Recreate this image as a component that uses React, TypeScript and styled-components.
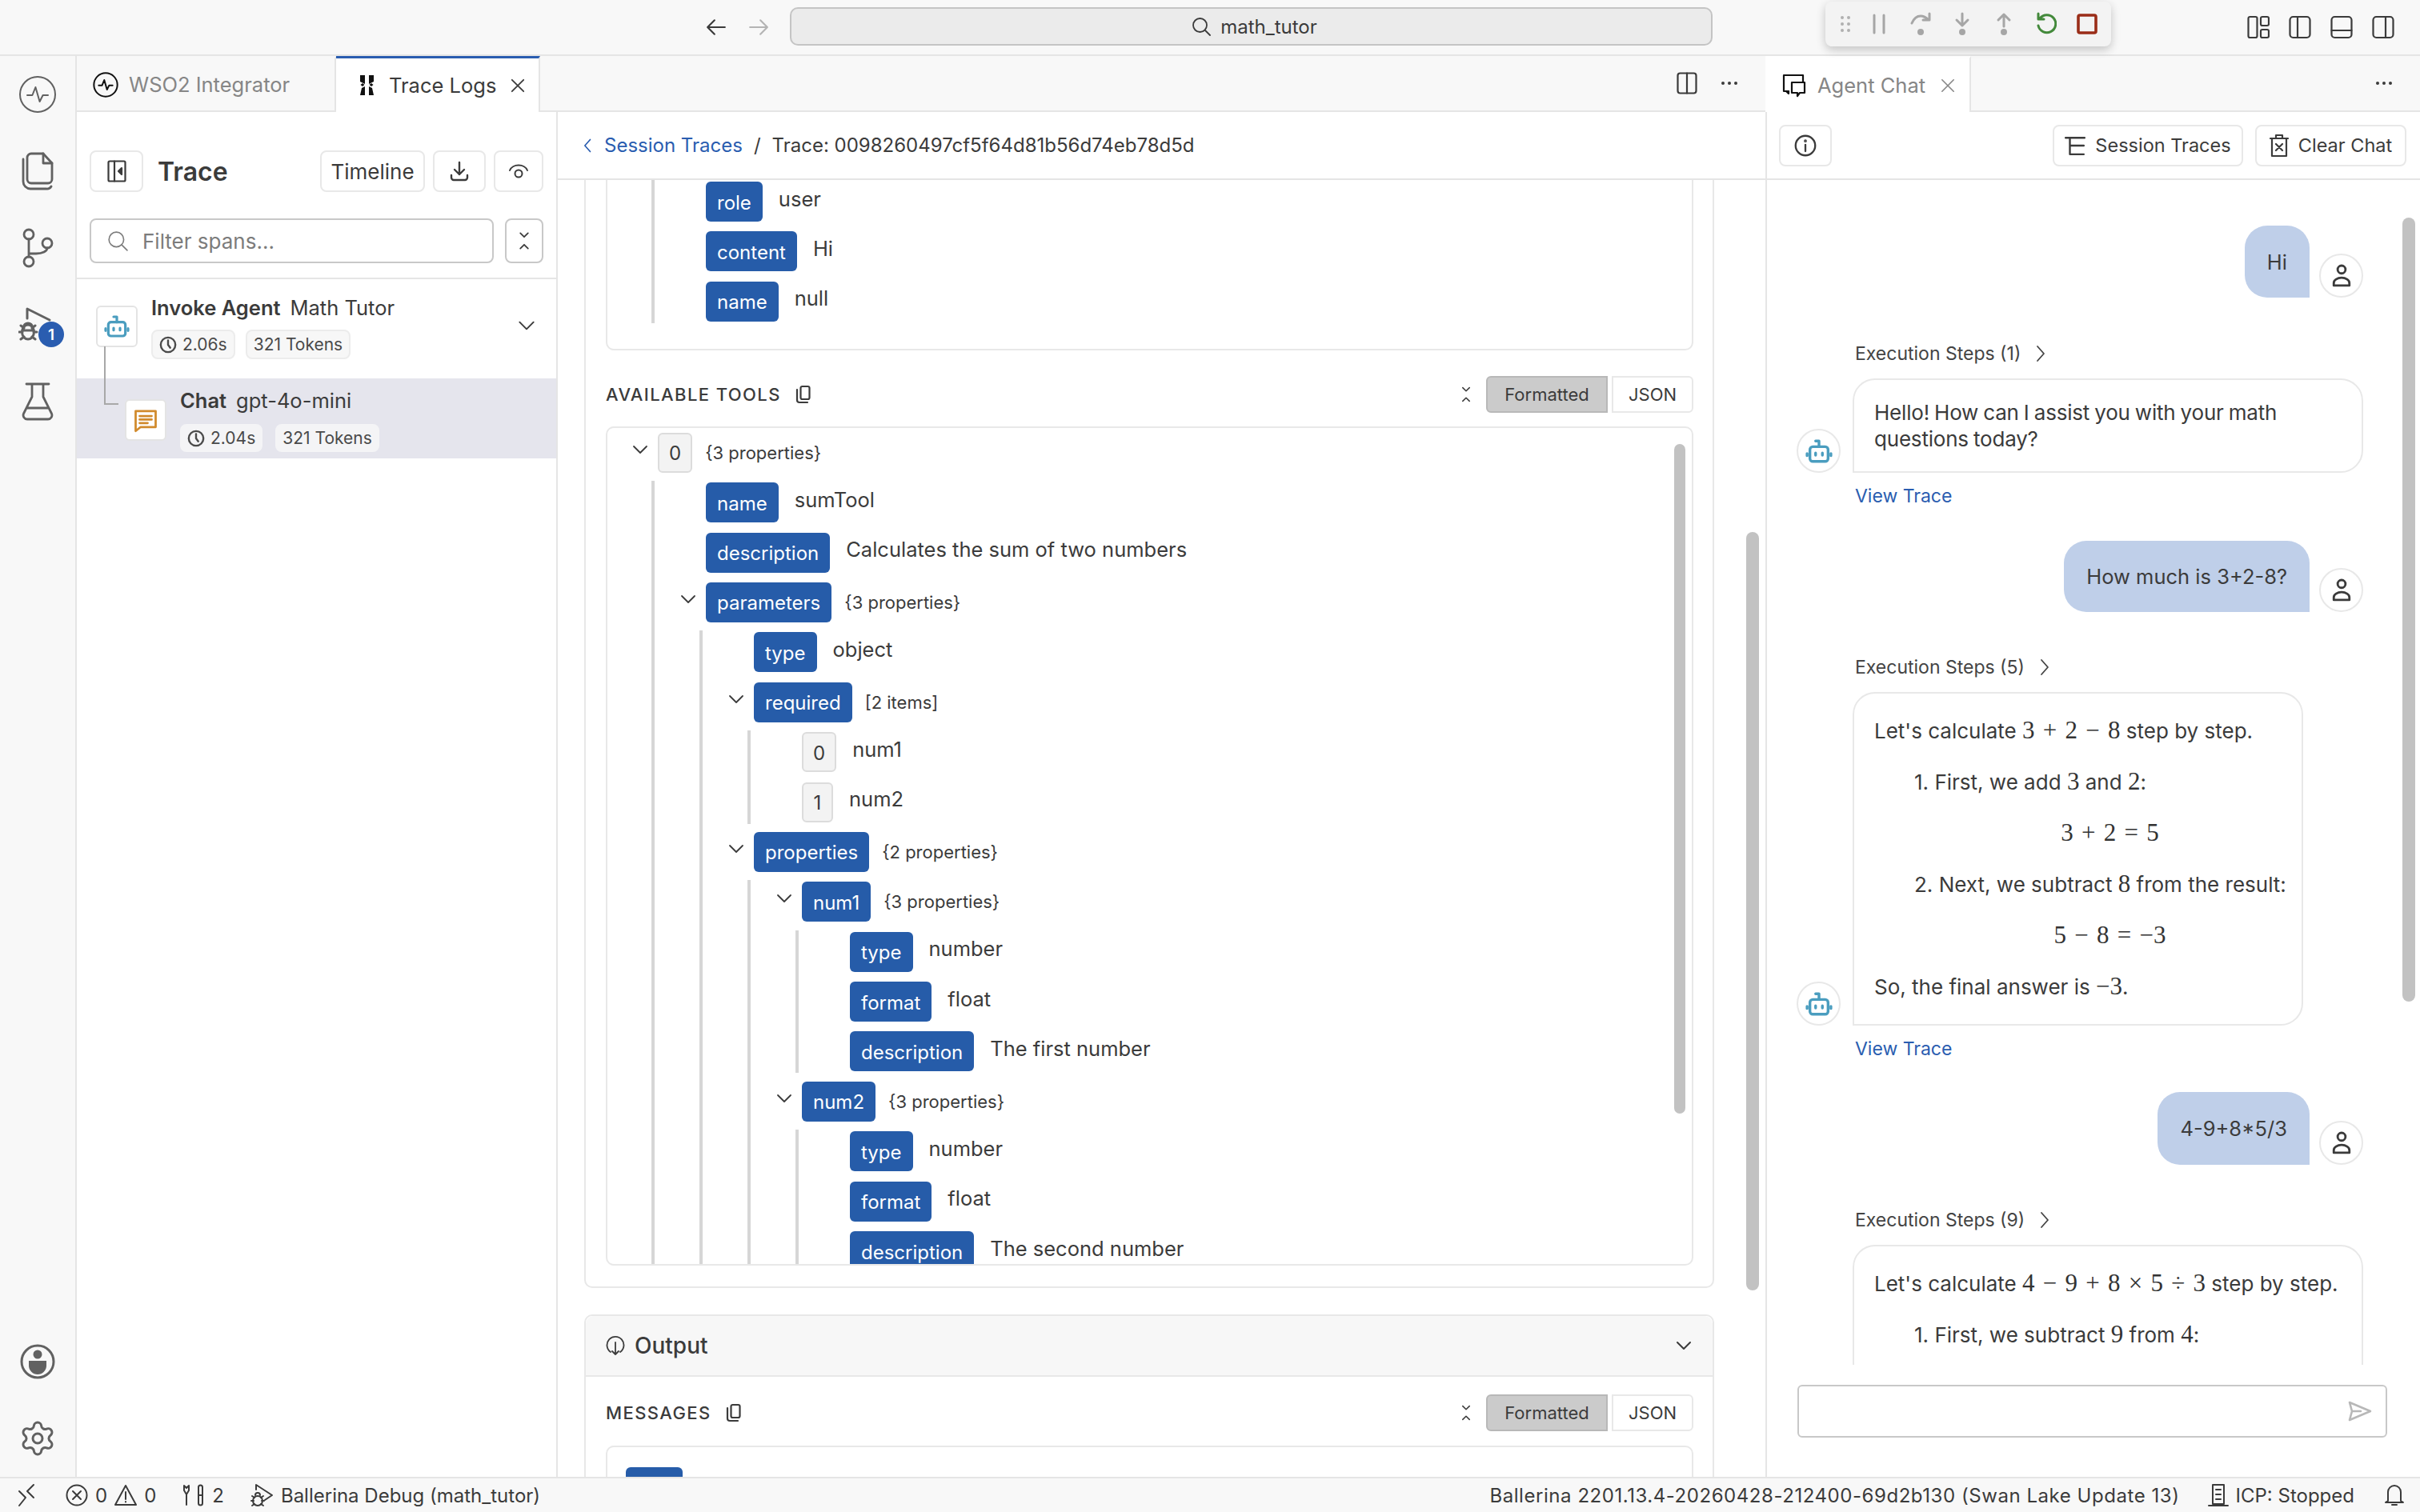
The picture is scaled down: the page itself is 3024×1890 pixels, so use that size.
import React from "react";
import styled, { createGlobalStyle } from "styled-components";
import { Settings } from "lucide-react";

const Global = createGlobalStyle`
  html, body { margin: 0; padding: 0; background: #fff; }
  body { font-family: Inter, "Liberation Sans", sans-serif; color: #3b3b3b; width: 3024px; height: 1890px; overflow: hidden; }
  * { box-sizing: border-box; }
`;

const Page = styled.div`
  width: 3024px; height: 1890px; display: flex; flex-direction: column; position: relative; overflow: hidden;
`;
const Glyph = styled.svg`
  fill: none; stroke: currentColor; stroke-linecap: round; stroke-linejoin: round; flex-shrink: 0; display: block;
`;

/* ---------- title bar ---------- */
const TitleBar = styled.header`
  height: 70px; flex-shrink: 0; background: #f8f8f8; border-bottom: 2px solid #e5e5e5;
  display: grid; grid-template-columns: 882px 105px 1153px 1fr; align-items: center;
`;
const NavArrows = styled.div`display: flex; gap: 27px; color: #3b3b3b;`;
const NavArrow = styled.span<{ $dim?: boolean }>`color: ${p => (p.$dim ? "#b4b4b4" : "#3b3b3b")}; display: flex;`;
const SearchBox = styled.div`
  height: 48px; margin-top: -2px; background: #ebebeb; border: 2px solid #c4c4c4; border-radius: 10px;
  display: flex; align-items: center; justify-content: center; gap: 12px; font-size: 24px; color: #3b3b3b; padding-left: 8px;
`;
const LayoutIcons = styled.div`display: flex; justify-content: flex-end; gap: 24px; padding-right: 32px; color: #3b3b3b;`;
const DebugToolbar = styled.div`
  position: absolute; left: 2281px; top: 2px; width: 357px; height: 56px; background: #f3f3f3; border-radius: 8px;
  box-shadow: 0 4px 12px rgba(0,0,0,.22); display: flex; align-items: center; padding-left: 4px; z-index: 5; color: #a6a6a6;
`;
const DebugSlot = styled.span<{ $w: number; $after?: number }>`
  width: ${p => p.$w}px; margin-right: ${p => p.$after ?? 0}px; display: flex; align-items: center; justify-content: center; flex-shrink: 0;
`;

/* ---------- workbench ---------- */
const Workbench = styled.div`flex: 1; min-height: 0; display: flex;`;
const ActivityBar = styled.nav`
  width: 96px; flex-shrink: 0; background: #f8f8f8; border-right: 2px solid #e5e5e5; display: flex; flex-direction: column;
  align-items: center; color: #616161;
`;
const ActivityItem = styled.div`
  width: 94px; height: 96px; display: flex; align-items: center; justify-content: center; position: relative;
`;
const ActivitySpacer = styled.div`flex: 1;`;
const Badge = styled.span`
  position: absolute; left: 48px; top: 44px; width: 32px; height: 32px; border-radius: 50%; background: #2a5db0; color: #fff;
  font-size: 19px; font-weight: 600; display: flex; align-items: center; justify-content: center;
`;

const EditorGroup = styled.section`width: 2110px; flex-shrink: 0; display: flex; flex-direction: column;`;
const TabBar = styled.div`
  height: 70px; flex-shrink: 0; background: #f8f8f8; border-bottom: 2px solid #e5e5e5; display: flex; align-items: stretch;
`;
const Tab = styled.div<{ $active?: boolean; $w: number; $pad: number; $dimText?: boolean }>`
  width: ${p => p.$w}px; padding-left: ${p => p.$pad}px; display: flex; align-items: center; font-size: 25.5px;
  color: ${p => (p.$active && !p.$dimText ? "#3b3b3b" : "#868686")}; border-right: 2px solid #e5e5e5;
  background: ${p => (p.$active ? "#fff" : "transparent")};
  border-top: ${p => (p.$active && !p.$dimText ? "3px solid #2a5db0" : "3px solid transparent")};
  margin-bottom: ${p => (p.$active ? "-2px" : "0")};
`;
const TabGap = styled.span<{ $w: number }>`width: ${p => p.$w}px; flex-shrink: 0;`;
const TabIcon = styled.span`color: #111; display: flex;`;
const TabTools = styled.div`margin-left: auto; display: flex; align-items: center; gap: 29px; padding-right: 34px; color: #3b3b3b;`;
const EditorBody = styled.div`flex: 1; min-height: 0; display: flex;`;

/* ---------- span panel ---------- */
const SpanPanel = styled.aside`width: 601px; flex-shrink: 0; border-right: 2px solid #e5e5e5; display: flex; flex-direction: column;`;
const SpanHead = styled.div`padding: 48px 16px 18px 16px; border-bottom: 2px solid #e5e5e5; display: flex; flex-direction: column; gap: 33px;`;
const SpanHeadRow = styled.div`display: flex; align-items: center;`;
const ToolButton = styled.button<{ $w?: number; $h?: number }>`
  height: ${p => p.$h ?? 52}px; ${p => (p.$w ? `width: ${p.$w}px;` : "padding: 0 16px;")} background: #fff; border: 2px solid #e8e8e8; border-radius: 8px;
  display: inline-flex; align-items: center; justify-content: center; gap: 12px; font: 400 26px Inter, sans-serif; color: #3b3b3b; flex-shrink: 0; padding-top: 0; padding-bottom: 0;
`;
const TraceTitle = styled.h1`margin: 0 0 0 18px; font-size: 32px; font-weight: 600; color: #3b3b3b;`;
const RightGroup = styled.div`margin-left: auto; display: flex; gap: 10px;`;
const FilterBox = styled.div`
  flex: 1; height: 56px; border: 2px solid #c8c8c8; border-radius: 8px; display: flex; align-items: center; gap: 18px; padding-left: 20px;
  color: #7c7c7c; font-size: 26px;
`;
const CollapseBox = styled.div`
  width: 48px; height: 56px; margin-left: 14px; border: 2px solid #c8c8c8; border-radius: 8px; display: flex; align-items: center; justify-content: center; color: #3b3b3b;
`;
const SpanRow = styled.div<{ $selected?: boolean; $indent: number; $h: number; $top: number }>`
  height: ${p => p.$h}px; padding: ${p => p.$top}px 24px 0 ${p => p.$indent}px; display: flex; gap: 17px; position: relative;
  background: ${p => (p.$selected ? "#e5e5ed" : "transparent")};
`;
const SpanIconBox = styled.div<{ $color: string; $top: number }>`
  width: 52px; height: 52px; margin-top: ${p => p.$top}px; background: #fff; border: 2px solid #e4e4e4; border-radius: 6px; display: flex; align-items: center; justify-content: center; color: ${p => p.$color}; flex-shrink: 0;
`;
const SpanText = styled.div`flex: 1; display: flex; flex-direction: column;`;
const SpanTitle = styled.div`font-size: 25.5px; line-height: 30px; color: #3b3b3b; display: flex; gap: 12px;`;
const Strong = styled.span`font-weight: 600;`;
const ChipRow = styled.div<{ $gap: number; $top: number }>`display: flex; gap: ${p => p.$gap}px; margin-top: ${p => p.$top}px;`;
const Chip = styled.span<{ $flat?: boolean }>`
  height: ${p => (p.$flat ? 35 : 37)}px; padding: 0 ${p => (p.$flat ? 7 : 8)}px; background: ${p => (p.$flat ? "#f4f4f6" : "#f7f7f7")}; border: 2px solid ${p => (p.$flat ? "#f4f4f6" : "#ececec")}; border-radius: 8px;
  display: inline-flex; align-items: center; gap: 7px; font-size: 21px; color: #4a4a4a; white-space: nowrap;
`;
const RowChevron = styled.span`align-self: flex-start; margin-top: 24px; color: #3b3b3b;`;
const Connector = styled.span`
  position: absolute; left: 34px; top: -40px; width: 18px; height: 73px; border-left: 2px solid #a8a8a8; border-bottom: 2px solid #a8a8a8;
`;

/* ---------- main ---------- */
const MainPanel = styled.main`flex: 1; min-width: 0; display: flex; flex-direction: column;`;
const Breadcrumb = styled.div`
  height: 85px; flex-shrink: 0; border-bottom: 2px solid #e5e5e5; display: flex; align-items: center; padding-left: 28px; font-size: 24px; color: #3b3b3b;
`;
const CrumbLink = styled.span`color: #2a5db0; display: flex; align-items: center; gap: 10px;`;
const CrumbSep = styled.span`margin: 0 14px;`;
const ScrollArea = styled.div`flex: 1; min-height: 0; overflow: hidden; position: relative; padding: 0 64px 0 33px;`;
const Thumb = styled.span<{ $right: number; $top: number; $h: number; $w: number }>`
  position: absolute; right: ${p => p.$right}px; top: ${p => p.$top}px; height: ${p => p.$h}px; width: ${p => p.$w}px; background: #c2c2c2; border-radius: 8px; z-index: 2;
`;
const OuterCard = styled.div`
  margin-top: -60px; border: 2px solid #e8e8e8; border-radius: 10px; padding: 0 24px 26px 25px;
`;
const InnerCard = styled.div`
  border: 2px solid #e8e8e8; border-radius: 10px; padding: 0 24px 34px 63px; overflow: hidden;
`;
const SectionHead = styled.div<{ $top: number }>`
  height: 47px; margin-top: ${p => p.$top}px; display: flex; align-items: center;
`;
const SectionLabel = styled.span`font-size: 22px; font-weight: 500; letter-spacing: 1.4px; color: #3b3b3b;`;
const CopyWrap = styled.span`margin-left: 16px; color: #3b3b3b; display: flex;`;
const SectionTools = styled.div`margin-left: auto; display: flex; align-items: center; gap: 18px; color: #3b3b3b;`;
const ToggleGroup = styled.div`display: flex; gap: 5px;`;
const ToggleBtn = styled.span<{ $on?: boolean; $w: number }>`
  width: ${p => p.$w}px; height: 46px; display: flex; align-items: center; justify-content: center; font-size: 22px; color: #3b3b3b;
  background: ${p => (p.$on ? "#cbcbcb" : "#fff")}; border: 2px solid ${p => (p.$on ? "#b8b8b8" : "#e8e8e8")};
  border-radius: ${p => (p.$on ? "6px 0 0 6px" : "0 6px 6px 0")};
`;
const TreeCard = styled.div`
  height: 1049px; margin-top: 16px; border: 2px solid #e8e8e8; border-radius: 10px; padding: 6px 0 0 63px; overflow: hidden; position: relative;
`;
const TreeList = styled.div`display: flex; flex-direction: column; gap: 12.4px;`;
const Branch = styled.div<{ $first?: boolean }>`
  display: flex; flex-direction: column; gap: 12.4px; margin: ${p => (p.$first ? "0" : "-2px")} 0 -2px -8px;
  padding: ${p => (p.$first ? "58px" : "2px")} 0 2px 64px; border-left: 4px solid #d6d6d6;
`;
const TreeRow = styled.div`display: flex; align-items: flex-start; height: 50px;`;
const TreeChevron = styled.span`width: 34px; margin-left: -34px; margin-top: 9px; color: #3b3b3b; flex-shrink: 0;`;
const KeyTag = styled.span`
  height: 50px; padding: 2px 14px 0; background: #265ca9; color: #fff; border-radius: 6px; font-size: 24px; display: flex; align-items: center; white-space: nowrap;
`;
const IndexTag = styled.span`
  height: 50px; min-width: 39px; padding: 2px 12px 0; background: #f3f3f3; color: #3b3b3b; border: 2px solid #dcdcdc; border-radius: 6px; font-size: 24px; display: flex; align-items: center; justify-content: center;
`;
const ValueText = styled.span`margin-left: 20px; height: 42px; display: flex; align-items: center; font-size: 25.5px; color: #3b3b3b; white-space: nowrap;`;
const Summary = styled.span`margin-left: 16px; height: 50px; display: flex; align-items: center; font-size: 22px; color: #3b3b3b; white-space: nowrap;`;
const OutputPanel = styled.section`margin-top: 33px; border: 2px solid #e8e8e8; border-radius: 10px 10px 0 0; padding-bottom: 40px;`;
const OutputHead = styled.div`
  height: 76px; background: #f7f7f7; border-bottom: 2px solid #e8e8e8; display: flex; align-items: center; gap: 12px; padding: 0 24px 0 25px; font-size: 28px; font-weight: 500; color: #3b3b3b; border-radius: 10px 10px 0 0;
`;
const OutputChevron = styled.span`margin-left: auto; color: #3b3b3b;`;
const OutputBody = styled.div`padding: 0 24px 0 25px;`;
const MsgCard = styled.div`margin-top: 17px; height: 120px; border: 2px solid #e8e8e8; border-radius: 10px; padding: 25px 0 0 23px;`;
const MsgKey = styled.span`display: block; width: 71px; height: 50px; background: #265ca9; border-radius: 6px;`;

/* ---------- chat ---------- */
const ChatGroup = styled.section`flex: 1; min-width: 0; display: flex; flex-direction: column;`;
const ChatHead = styled.div`
  height: 85px; flex-shrink: 0; border-bottom: 2px solid #e5e5e5; display: flex; align-items: center; padding: 0 17px 0 15px;
`;
const ChatHeadRight = styled.div`margin-left: auto; display: flex; gap: 15px;`;
const ChatHeadButton = styled(ToolButton)`font-size: 23.5px;`;
const ChatBody = styled.div`flex: 1; min-height: 0; display: flex; flex-direction: column; border-left: 2px solid #e5e5e5;`;
const ChatScroll = styled.div`flex: 1; min-height: 0; overflow: hidden; position: relative; padding: 57px 71px 0 37px;`;
const UserRow = styled.div<{ $top?: number }>`display: flex; justify-content: flex-end; align-items: flex-end; gap: 12px; margin-top: ${p => p.$top ?? 0}px;`;
const UserBubble = styled.div<{ $h: number }>`
  height: ${p => p.$h}px; padding: 0 28px; background: #bfcfe9; border-radius: 28px 28px 0 28px; display: flex; align-items: center; font-size: 25.5px; color: #3b3b3b;
`;
const Avatar = styled.span<{ $color: string }>`
  width: 55px; height: 55px; border-radius: 50%; background: #fff; border: 2px solid #e8e8e8; display: flex; align-items: center; justify-content: center; color: ${p => p.$color}; flex-shrink: 0;
`;
const StepsLabel = styled.div<{ $top: number }>`
  margin: ${p => p.$top}px 0 0 73px; height: 30px; display: flex; align-items: center; gap: 13px; font-size: 23px; color: #444;
`;
const AgentRow = styled.div`margin-top: 16px; display: flex; align-items: flex-end; gap: 15px;`;
const AgentBubble = styled.div<{ $gap?: number; $pad?: number; $w: number; $minH?: number }>`
  width: ${p => p.$w}px; min-height: ${p => p.$minH ?? 0}px; padding: ${p => p.$pad ?? 24}px 25px; border: 2px solid #e8e8e8; border-radius: 28px 28px 28px 0; font-size: 26px; line-height: 33px; color: #3b3b3b;
  display: flex; flex-direction: column; gap: ${p => p.$gap ?? 0}px;
`;
const TightText = styled.span`letter-spacing: -0.2px; word-spacing: -1px;`;
const BubbleLine = styled.div<{ $indent?: number }>`padding-left: ${p => p.$indent ?? 0}px; white-space: nowrap;`;
const MathBlock = styled.div`padding-left: 80px; text-align: center; white-space: nowrap;`;
const MathText = styled.span`font-family: "Liberation Serif", serif; font-size: 31px; line-height: 1; word-spacing: 2.5px; color: #333;`;
const ViewTrace = styled.div`margin: 14px 0 0 73px; height: 30px; display: flex; align-items: center; font-size: 23px; color: #2a5db0;`;
const ChatInputWrap = styled.div`height: 140px; flex-shrink: 0; padding: 25px 41px 0 38px;`;
const ChatInput = styled.div`
  height: 66px; border: 2px solid #c8c8c8; border-radius: 6px; display: flex; align-items: center; justify-content: flex-end; padding-right: 17px; color: #b8b8b8;
`;

/* ---------- status bar ---------- */
const StatusBar = styled.footer`
  height: 44px; flex-shrink: 0; background: #f8f8f8; border-top: 2px solid #e5e5e5; display: flex; align-items: center; font-size: 24px; color: #3b3b3b; padding: 0 19px 0 22px;
`;
const StatusItem = styled.span<{ $left?: number; $track?: number }>`
  display: flex; align-items: center; gap: 9px; margin-left: ${p => p.$left ?? 0}px; white-space: nowrap; letter-spacing: ${p => p.$track ?? 0}px;
`;
const StatusRight = styled.div`margin-left: auto; display: flex; align-items: center;`;

/* ---------- icons ---------- */
type IP = { s?: number; w?: number };
const Chevron = ({ d, s = 22, w = 2 }: IP & { d: "down" | "up" | "left" | "right" }) => {
  const p = { down: "M4 8l8 8 8-8", up: "M4 16l8-8 8 8", left: "M15 3L7 12l8 9", right: "M8 3l8 9-8 9" }[d];
  return <Glyph width={s} height={s} viewBox="0 0 24 24" strokeWidth={w}><path d={p} /></Glyph>;
};
const Collapse = ({ h = 28, sw = 20 }: { h?: number; sw?: number }) => (
  <Glyph width={sw} height={h} viewBox="0 0 20 28" strokeWidth={2.2}><path d="M4 2l6 6 6-6M4 26l6-6 6 6" /></Glyph>
);
const Pulse = ({ s, w = 1.1 }: IP) => (
  <Glyph width={s} height={s} viewBox="0 0 24 24" strokeWidth={w}><circle cx="12" cy="12" r="11" /><path d="M5.500 12.500h3.200l2-5 2.600 9 2-4h3.200" /></Glyph>
);
const Files = () => (
  <Glyph width={42} height={48} viewBox="0 0 42 48" strokeWidth={2.8}>
    <path d="M13 2h15l11 12v20a5 5 0 0 1-5 5H13a5 5 0 0 1-5-5V7a5 5 0 0 1 5-5z" /><path d="M28 2v12h11" /><path d="M3 9v28a9 9 0 0 0 9 9h20a6 6 0 0 0 6-3" />
  </Glyph>
);
const GitIcon = () => (
  <Glyph width={42} height={50} viewBox="0 0 42 50" strokeWidth={2.8}>
    <circle cx="10" cy="8" r="6" /><circle cx="10" cy="42" r="6" /><circle cx="33" cy="19" r="6" /><path d="M10 14v22M10 32h9c8 0 14-3 14-7" />
  </Glyph>
);
const DebugIcon = () => (
  <Glyph width={48} height={48} viewBox="0 0 48 48" strokeWidth={3}>
    <path d="M11 16V4l28 14" /><ellipse cx="12" cy="33" rx="7.500" ry="9" /><path d="M6.500 27a5.500 5 0 0 1 11 0M5 33H1M19 33h4M3 25l4 3M21 25l-4 3M3 42l4-3M21 42l-4-3M5 31h14" />
  </Glyph>
);
const Flask = () => (
  <Glyph width={40} height={48} viewBox="0 0 40 48" strokeWidth={2.8}>
    <path d="M6 2h28M13 2v16L2.500 39a5 5 0 0 0 4.500 7h26a5 5 0 0 0 4.500-7L27 18V2M8 32h24" />
  </Glyph>
);
const Account = () => (
  <svg width="44" height="46" viewBox="0 0 44 46" style={{ display: "block" }}>
    <circle cx="22" cy="23" r="20" fill="none" stroke="currentColor" strokeWidth="3" />
    <circle cx="22" cy="14" r="5.500" fill="currentColor" /><path d="M11 22h22v6a11 11 0 0 1-22 0z" fill="currentColor" />
  </svg>
);
const BotIcon = ({ s = 32, w = 2.400 }: IP) => (
  <Glyph width={s} height={s} viewBox="0 0 24 24" strokeWidth={w}>
    <rect x="4" y="8" width="16" height="13" rx="2.500" /><path d="M12 8V3H9M1.500 14v2M22.500 14v2M9 13.500v2M15 13.500v2" />
  </Glyph>
);
const ChatIcon = () => (
  <Glyph width={30} height={32} viewBox="0 0 24 24" strokeWidth={2.200}>
    <path d="M2 3h20v16H7l-5 4z" /><path d="M6 8h12M6 11.500h12M6 15h8" />
  </Glyph>
);
const Clock = ({ s = 22 }: IP) => (
  <Glyph width={s} height={s} viewBox="0 0 24 24" strokeWidth={2.600}><circle cx="12" cy="12" r="10" /><path d="M12 6v6l3 4" /></Glyph>
);
const Magnifier = ({ s = 26, w = 1.600 }: IP) => (
  <Glyph width={s} height={s} viewBox="0 0 24 24" strokeWidth={w}><circle cx="10.500" cy="10.500" r="8.500" /><path d="M17 17l6 6" /></Glyph>
);
const Cross = ({ s = 20, w = 2 }: IP) => (
  <Glyph width={s} height={s} viewBox="0 0 20 20" strokeWidth={w}><path d="M2 2l16 16M18 2L2 18" /></Glyph>
);
const Dots = () => (
  <svg width="22" height="6" viewBox="0 0 22 6" style={{ display: "block" }}><g fill="currentColor"><circle cx="3" cy="3" r="2" /><circle cx="11" cy="3" r="2" /><circle cx="19" cy="3" r="2" /></g></svg>
);
const CopyIcon = ({ s = 24 }: IP) => (
  <Glyph width={s} height={s} viewBox="0 0 24 24" strokeWidth={2.200}><rect x="8.500" y="2" width="11" height="16" rx="2" /><path d="M4 6v13a3 3 0 0 0 3 3h10" /></Glyph>
);
const Person = () => (
  <Glyph width={26} height={32} viewBox="0 0 24 28" strokeWidth={2.600}><circle cx="12" cy="6.500" r="4.500" /><path d="M3 25v-3a9 6 0 0 1 18 0v3z" /></Glyph>
);
const LayoutIcon = ({ kind }: { kind: "grid" | "left" | "bottom" | "right" }) => (
  <Glyph width={28} height={30} viewBox="0 0 28 30" strokeWidth={2.200}>
    {kind === "grid" ? (
      <><rect x="1.500" y="2" width="11" height="26" rx="2" /><rect x="17" y="2" width="10" height="11" rx="2" /><rect x="17" y="18" width="10" height="10" rx="2" /></>
    ) : (
      <><rect x="1.500" y="2" width="25" height="26" rx="4" /><path d={kind === "left" ? "M11 2v26" : kind === "right" ? "M17 2v26" : "M1.500 19h25"} /></>
    )}
  </Glyph>
);
const TraceGlyph = () => (
  <svg width="17" height="25" viewBox="0 0 17 25" style={{ display: "block" }} fill="#111">
    <path d="M0 0h6v11L0 8zM11 0h6v8l-6 3zM3 10l2.500 2L3 14 .5 12zM14 10l2.500 2-2.500 2-2.500-2zM0 25l2-9 4-2v11zM11 14l4 2 2 9h-6z" />
  </svg>
);
const CommentsIcon = () => (
  <Glyph width={30} height={30} viewBox="0 0 30 30" strokeWidth={2.200}>
    <path d="M8 22H2V2h24v8" /><path d="M8 22v3l-3-3" /><path d="M12 11h16v13h-6l-3 4v-4h-7z" />
  </Glyph>
);
const StepIcon = ({ d }: { d: string }) => (
  <Glyph width={28} height={30} viewBox="0 0 28 30" strokeWidth={3}>
    <path d={d} /><circle cx="14" cy="25" r="3" fill="currentColor" strokeWidth={2} />
  </Glyph>
);

type Node = { k: string; v?: string; sum?: string; idx?: boolean; kids?: Node[] };
const TOOL: Node = {
  k: "0", idx: true, sum: "{3 properties}",
  kids: [
    { k: "name", v: "sumTool" },
    { k: "description", v: "Calculates the sum of two numbers" },
    {
      k: "parameters", sum: "{3 properties}",
      kids: [
        { k: "type", v: "object" },
        { k: "required", sum: "[2 items]", kids: [{ k: "0", idx: true, v: "num1" }, { k: "1", idx: true, v: "num2" }] },
        {
          k: "properties", sum: "{2 properties}",
          kids: [
            { k: "num1", sum: "{3 properties}", kids: [{ k: "type", v: "number" }, { k: "format", v: "float" }, { k: "description", v: "The first number" }] },
            { k: "num2", sum: "{3 properties}", kids: [{ k: "type", v: "number" }, { k: "format", v: "float" }, { k: "description", v: "The second number" }] },
          ],
        },
      ],
    },
  ],
};
const TreeNode = ({ n }: { n: Node }) => (
  <>
    <TreeRow>
      {n.kids && <TreeChevron><Chevron d="down" s={24} w={1.800} /></TreeChevron>}
      {n.idx ? <IndexTag>{n.k}</IndexTag> : <KeyTag>{n.k}</KeyTag>}
      {n.sum ? <Summary>{n.sum}</Summary> : <ValueText>{n.v}</ValueText>}
    </TreeRow>
    {n.kids && <Branch>{n.kids.map((c, i) => <TreeNode key={i} n={c} />)}</Branch>}
  </>
);

const SectionHeader = ({ label, top }: { label: string; top: number }) => (
  <SectionHead $top={top}>
    <SectionLabel>{label}</SectionLabel>
    <CopyWrap><CopyIcon /></CopyWrap>
    <SectionTools>
      <Collapse h={20} sw={14} />
      <ToggleGroup><ToggleBtn $on $w={152}>Formatted</ToggleBtn><ToggleBtn $w={102}>JSON</ToggleBtn></ToggleGroup>
    </SectionTools>
  </SectionHead>
);

const Steps = ({ n, top }: { n: number; top: number }) => (
  <StepsLabel $top={top}>Execution Steps ({n}) <Chevron d="right" s={24} w={1.800} /></StepsLabel>
);

export default function App() {
  return (
    <Page>
      <Global />
      <TitleBar>
        <span />
        <NavArrows>
          <NavArrow><Glyph width={26} height={26} viewBox="0 0 24 24" strokeWidth={2}><path d="M22 12H3M10 4l-8 8 8 8" /></Glyph></NavArrow>
          <NavArrow $dim><Glyph width={26} height={26} viewBox="0 0 24 24" strokeWidth={2}><path d="M2 12h19M14 4l8 8-8 8" /></Glyph></NavArrow>
        </NavArrows>
        <SearchBox><Magnifier s={24} w={1.800} />math_tutor</SearchBox>
        <LayoutIcons>
          <LayoutIcon kind="grid" /><LayoutIcon kind="left" /><LayoutIcon kind="bottom" /><LayoutIcon kind="right" />
        </LayoutIcons>
      </TitleBar>
      <DebugToolbar>
        <DebugSlot $w={42}>
          <svg width="16" height="24" viewBox="0 0 16 24" style={{ display: "block" }}><g fill="#b0b0b0"><circle cx="4" cy="4" r="2" /><circle cx="12" cy="4" r="2" /><circle cx="4" cy="12" r="2" /><circle cx="12" cy="12" r="2" /><circle cx="4" cy="20" r="2" /><circle cx="12" cy="20" r="2" /></g></svg>
        </DebugSlot>
        <DebugSlot $w={42} $after={5}>
          <Glyph width={20} height={28} viewBox="0 0 20 28" strokeWidth={3}><path d="M4 3v22M16 3v22" /></Glyph>
        </DebugSlot>
        <DebugSlot $w={52}><StepIcon d="M3 14C6 7 10 5 14 5c4 0 7 2 10 5M25 2v8h-8" /></DebugSlot>
        <DebugSlot $w={52}><StepIcon d="M14 2v15M7 10l7 7 7-7" /></DebugSlot>
        <DebugSlot $w={52}><StepIcon d="M14 18V3M7 10l7-7 7 7" /></DebugSlot>
        <DebugSlot $w={52}>
          <Glyph width={28} height={30} viewBox="0 0 28 30" strokeWidth={3} style={{ color: "#43893b" }}><path d="M7 8a11 11 0 1 1-2 9M5 2v7h7" /></Glyph>
        </DebugSlot>
        <DebugSlot $w={52}>
          <Glyph width={28} height={30} viewBox="0 0 28 30" strokeWidth={3.600} style={{ color: "#9a2d18" }}><rect x="3" y="4" width="22" height="22" rx="2" /></Glyph>
        </DebugSlot>
      </DebugToolbar>

      <Workbench>
        <ActivityBar>
          <ActivityItem><Pulse s={48} w={1} /></ActivityItem>
          <ActivityItem><Files /></ActivityItem>
          <ActivityItem><GitIcon /></ActivityItem>
          <ActivityItem><DebugIcon /><Badge>1</Badge></ActivityItem>
          <ActivityItem><Flask /></ActivityItem>
          <ActivitySpacer />
          <ActivityItem><Account /></ActivityItem>
          <ActivityItem><Settings size={48} strokeWidth={1.500} /></ActivityItem>
        </ActivityBar>

        <EditorGroup>
          <TabBar>
            <Tab $w={324} $pad={20}><TabIcon><Pulse s={32} w={1.500} /></TabIcon><TabGap $w={13} />WSO2 Integrator</Tab>
            <Tab $w={255} $pad={30} $active><TraceGlyph /><TabGap $w={19} />Trace Logs<TabGap $w={18} /><Cross s={18} /></Tab>
            <TabTools>
              <Glyph width={26} height={28} viewBox="0 0 26 28" strokeWidth={2.200}><rect x="1.500" y="1.500" width="23" height="25" rx="3" /><path d="M13 1.500v25" /></Glyph>
              <Dots />
            </TabTools>
          </TabBar>
          <EditorBody>
            <SpanPanel>
              <SpanHead>
                <SpanHeadRow>
                  <ToolButton $w={67}>
                    <Glyph width={24} height={28} viewBox="0 0 24 28" strokeWidth={2.200}><rect x="1.500" y="1.500" width="21" height="25" rx="1.500" /><path d="M9 1.500v25" /><path d="M18 10l-4 4 4 4z" fill="currentColor" /></Glyph>
                  </ToolButton>
                  <TraceTitle>Trace</TraceTitle>
                  <RightGroup>
                    <ToolButton $w={131}>Timeline</ToolButton>
                    <ToolButton $w={66}><Glyph width={24} height={26} viewBox="0 0 24 26" strokeWidth={2.400}><path d="M12 2v15M6 11l6 6 6-6M2 18v3a3 3 0 0 0 3 3h14a3 3 0 0 0 3-3v-3" /></Glyph></ToolButton>
                    <ToolButton $w={62}><Glyph width={26} height={22} viewBox="0 0 26 22" strokeWidth={2}><path d="M2 10a11.500 9 0 0 1 22 0" /><circle cx="13" cy="14" r="4.500" /></Glyph></ToolButton>
                  </RightGroup>
                </SpanHeadRow>
                <SpanHeadRow>
                  <FilterBox><Magnifier s={26} w={1.500} />Filter spans...</FilterBox>
                  <CollapseBox><Collapse h={28} sw={16} /></CollapseBox>
                </SpanHeadRow>
              </SpanHead>

              <SpanRow $indent={24} $h={124} $top={21}>
                <SpanIconBox $color="#4a9dbf" $top={12}><BotIcon s={32} /></SpanIconBox>
                <SpanText>
                  <SpanTitle><Strong>Invoke Agent</Strong>Math Tutor</SpanTitle>
                  <ChipRow $gap={13} $top={12}>
                    <Chip><Clock />2.06s</Chip>
                    <Chip>321 Tokens</Chip>
                  </ChipRow>
                </SpanText>
                <RowChevron><Chevron d="down" s={26} w={1.800} /></RowChevron>
              </SpanRow>
              <SpanRow $selected $indent={60} $h={100} $top={13}>
                <Connector />
                <SpanIconBox $color="#d18a2c" $top={13}><ChatIcon /></SpanIconBox>
                <SpanText>
                  <SpanTitle><Strong>Chat</Strong>gpt-4o-mini</SpanTitle>
                  <ChipRow $gap={16} $top={14}>
                    <Chip $flat><Clock />2.04s</Chip>
                    <Chip $flat>321 Tokens</Chip>
                  </ChipRow>
                </SpanText>
              </SpanRow>
            </SpanPanel>

            <MainPanel>
              <Breadcrumb>
                <CrumbLink><Chevron d="left" s={20} w={2} />Session Traces</CrumbLink>
                <CrumbSep>/</CrumbSep>
                Trace: 0098260497cf5f64d81b56d74eb78d5d
              </Breadcrumb>
              <ScrollArea>
                <Thumb $right={8} $top={440} $h={948} $w={16} />
                <OuterCard>
                  <InnerCard>
                    <Branch $first>
                      <TreeRow><KeyTag>role</KeyTag><ValueText>user</ValueText></TreeRow>
                      <TreeRow><KeyTag>content</KeyTag><ValueText>Hi</ValueText></TreeRow>
                      <TreeRow><KeyTag>name</KeyTag><ValueText>null</ValueText></TreeRow>
                    </Branch>
                  </InnerCard>
                  <SectionHeader label="AVAILABLE TOOLS" top={32} />
                  <TreeCard>
                    <Thumb $right={8} $top={20} $h={837} $w={14} />
                    <TreeList><TreeNode n={TOOL} /></TreeList>
                  </TreeCard>
                </OuterCard>
                <OutputPanel>
                  <OutputHead>
                    <Glyph width={24} height={28} viewBox="0 0 24 28" strokeWidth={1.800}><path d="M6 22A10.500 10.500 0 1 1 18 22M12 10v15M8 21l4 4 4-4" /></Glyph>
                    Output
                    <OutputChevron><Chevron d="down" s={24} w={2} /></OutputChevron>
                  </OutputHead>
                  <OutputBody>
                    <SectionHeader label="MESSAGES" top={22} />
                    <MsgCard><MsgKey /></MsgCard>
                  </OutputBody>
                </OutputPanel>
              </ScrollArea>
            </MainPanel>
          </EditorBody>
        </EditorGroup>

        <ChatGroup>
          <TabBar>
            <Tab $w={257} $pad={21} $active $dimText>
              <TabIcon><CommentsIcon /></TabIcon><TabGap $w={14} />Agent Chat<TabGap $w={19} /><Cross s={18} w={1.800} />
            </Tab>
            <TabTools><Dots /></TabTools>
          </TabBar>
          <ChatBody>
            <ChatHead>
              <ToolButton $w={66}>
                <Glyph width={28} height={28} viewBox="0 0 24 24" strokeWidth={2}><circle cx="12" cy="12" r="10.500" /><path d="M12 11v7" /><circle cx="12" cy="7" r=".6" /></Glyph>
              </ToolButton>
              <ChatHeadRight>
                <ChatHeadButton $w={238}>
                  <Glyph width={26} height={26} viewBox="0 0 24 24" strokeWidth={2.200}><path d="M1 3h22M6 3v19M6 12h16M6 22h16" /></Glyph>Session Traces
                </ChatHeadButton>
                <ChatHeadButton $w={189}>
                  <Glyph width={24} height={30} viewBox="0 0 24 30" strokeWidth={2.200}><path d="M3 6h18v22H3zM8 6V2h8v4M1 6h22M8 13l8 8M16 13l-8 8" /></Glyph>Clear Chat
                </ChatHeadButton>
              </ChatHeadRight>
            </ChatHead>
            <ChatScroll>
              <Thumb $right={6} $top={47} $h={980} $w={16} />
              <UserRow><UserBubble $h={90}>Hi</UserBubble><Avatar $color="#3b3b3b"><Person /></Avatar></UserRow>

              <Steps n={1} top={55} />
              <AgentRow>
                <Avatar $color="#4a9dbf"><BotIcon s={34} /></Avatar>
                <AgentBubble $w={638}><TightText>Hello! How can I assist you with your math questions today?</TightText></AgentBubble>
              </AgentRow>
              <ViewTrace>View Trace</ViewTrace>

              <UserRow $top={41}><UserBubble $h={89}>How much is 3+2-8?</UserBubble><Avatar $color="#3b3b3b"><Person /></Avatar></UserRow>

              <Steps n={5} top={54} />
              <AgentRow>
                <Avatar $color="#4a9dbf"><BotIcon s={34} /></Avatar>
                <AgentBubble $w={563} $gap={31} $pad={30}>
                  <BubbleLine>Let's calculate <MathText>3 + 2 − 8</MathText> step by step.</BubbleLine>
                  <BubbleLine $indent={50}>1. First, we add <MathText>3</MathText> and <MathText>2</MathText>:</BubbleLine>
                  <MathBlock><MathText>3 + 2 = 5</MathText></MathBlock>
                  <BubbleLine $indent={50}>2. Next, we subtract <MathText>8</MathText> from the result:</BubbleLine>
                  <MathBlock><MathText>5 − 8 = −3</MathText></MathBlock>
                  <BubbleLine>So, the final answer is <MathText>−3</MathText>.</BubbleLine>
                </AgentBubble>
              </AgentRow>
              <ViewTrace>View Trace</ViewTrace>

              <UserRow $top={39}><UserBubble $h={91}>4-9+8*5/3</UserBubble><Avatar $color="#3b3b3b"><Person /></Avatar></UserRow>

              <Steps n={9} top={54} />
              <AgentRow>
                <Avatar $color="#4a9dbf"><BotIcon s={34} /></Avatar>
                <AgentBubble $w={638} $minH={480} $gap={31} $pad={30}>
                  <BubbleLine>Let's calculate <MathText>4 − 9 + 8 × 5 ÷ 3</MathText> step by step.</BubbleLine>
                  <BubbleLine $indent={50}>1. First, we subtract <MathText>9</MathText> from <MathText>4</MathText>:</BubbleLine>
                </AgentBubble>
              </AgentRow>
            </ChatScroll>
            <ChatInputWrap>
              <ChatInput>
                <Glyph width={30} height={26} viewBox="0 0 30 26" strokeWidth={2.600}><path d="M2 2l26 11L2 24l3-11zM5 13h11" /></Glyph>
              </ChatInput>
            </ChatInputWrap>
          </ChatBody>
        </ChatGroup>
      </Workbench>

      <StatusBar>
        <Glyph width={22} height={30} viewBox="0 0 22 30" strokeWidth={2}><path d="M2 10l8 8-8 10M20 2l-8 8 8 8" /></Glyph>
        <StatusItem $left={38}>
          <Glyph width={28} height={28} viewBox="0 0 28 28" strokeWidth={2}><circle cx="14" cy="14" r="12.500" /><path d="M9 9l10 10M19 9L9 19" /></Glyph>0
        </StatusItem>
        <StatusItem $left={9}>
          <Glyph width={28} height={28} viewBox="0 0 28 28" strokeWidth={2}><path d="M14 2l13 24H1zM14 10v9M14 22v.5" /></Glyph>0
        </StatusItem>
        <StatusItem $left={33}>
          <Glyph width={28} height={28} viewBox="0 0 28 28" strokeWidth={2}><path d="M5 26V13L2 8V2l3 3 3-3v6l-3 5M20 14V4a2.500 2.500 0 0 1 5 0v10zM20 14v10a2.500 2.500 0 0 0 5 0V14" /></Glyph>2
        </StatusItem>
        <StatusItem $left={32}>
          <Glyph width={30} height={30} viewBox="0 0 30 30" strokeWidth={2}><path d="M8 8V2l20 13-9 6" /><circle cx="10" cy="22" r="6" /><path d="M7 15a3 3 0 0 1 6 0M2 22h3M15 22h3M3 16l3 2M17 16l-3 2M3 28l3-2M17 28l-3-2" /></Glyph>
          Ballerina Debug (math_tutor)
        </StatusItem>
        <StatusRight>
          <StatusItem $track={0.55}>Ballerina 2201.13.4-20260428-212400-69d2b130 (Swan Lake Update 13)</StatusItem>
          <StatusItem $left={35}>
            <Glyph width={26} height={30} viewBox="0 0 26 30" strokeWidth={2}><path d="M6 2h14v24H6zM1 28h24M10 8h6M10 14h6M10 20h6" /></Glyph>ICP: Stopped
          </StatusItem>
          <StatusItem $left={37}>
            <Glyph width={26} height={30} viewBox="0 0 26 30" strokeWidth={2}><path d="M5 22V11a8 8 0 0 1 16 0v11l3 2H2zM10 27h6" /></Glyph>
          </StatusItem>
        </StatusRight>
      </StatusBar>
    </Page>
  );
}
